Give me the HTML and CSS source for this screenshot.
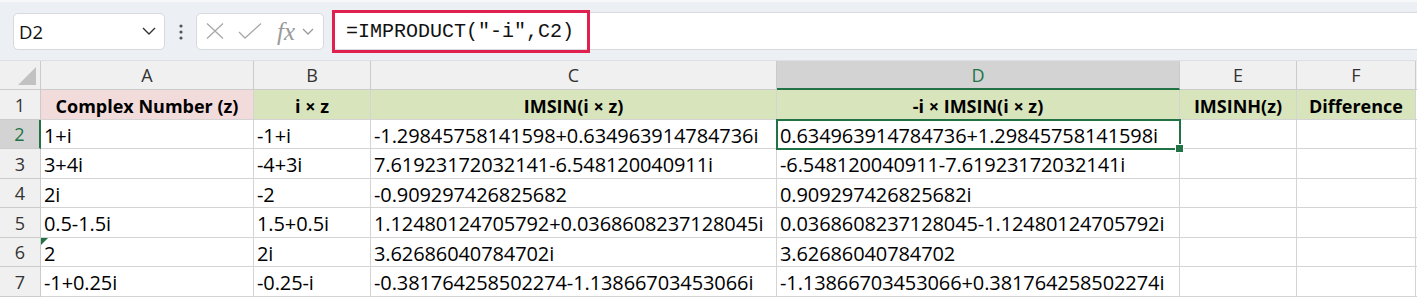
FILE: index.html
```html
<!DOCTYPE html>
<html lang="en">
<head>
    <meta charset="UTF-8">
    <title>IMPRODUCT sheet</title>
    <link rel="stylesheet" href="styles.css">
</head>
<body>
    <!-- Formula bar -->
    <div class="formula-bar">
        <div class="name-box">
            <span>D2</span>
            <svg class="chevron" width="14" height="8" viewBox="0 0 14 8"><path d="M1 1l6 6 6-6" fill="none" stroke="#333" stroke-width="1.4"/></svg>
        </div>
        <div class="dots">
            <svg width="4" height="16" viewBox="0 0 4 16"><circle cx="2" cy="2" r="1.6" fill="#555"/><circle cx="2" cy="8" r="1.6" fill="#555"/><circle cx="2" cy="14" r="1.6" fill="#555"/></svg>
        </div>
        <div class="fx-box">
            <svg width="18" height="16" viewBox="0 0 18 16"><path d="M1 0.5l16 15M17 0.5l-16 15" stroke="#a8a8a8" stroke-width="1.3"/></svg>
            <svg width="24" height="16" viewBox="0 0 24 16"><path d="M1 9l6 6L23 0.5" fill="none" stroke="#a8a8a8" stroke-width="1.3"/></svg>
            <span class="fx">fx</span>
            <svg width="12" height="7" viewBox="0 0 12 7"><path d="M1 1l5 5 5-5" fill="none" stroke="#9a9a9a" stroke-width="1.3"/></svg>
        </div>
        <div class="formula-input">
            <span class="formula-text">=IMPRODUCT("-i",C2)</span>
        </div>
    </div>

    <!-- Grid -->
    <div class="sheet">
        <div class="corner"><span class="corner-tri"></span></div>
        <div class="col-hdr">A</div>
        <div class="col-hdr">B</div>
        <div class="col-hdr">C</div>
        <div class="col-hdr selected">D</div>
        <div class="col-hdr">E</div>
        <div class="col-hdr">F</div>
        <div class="col-hdr"></div>

        <div class="row-hdr">1</div>
        <div class="cell head pink">Complex Number (z)</div>
        <div class="cell head green">i × z</div>
        <div class="cell head green">IMSIN(i × z)</div>
        <div class="cell head green">-i × IMSIN(i × z)</div>
        <div class="cell head green">IMSINH(z)</div>
        <div class="cell head green">Difference</div>
        <div class="cell"></div>

        <div class="row-hdr selected">2</div>
        <div class="cell">1+i</div>
        <div class="cell">-1+i</div>
        <div class="cell">-1.29845758141598+0.634963914784736i</div>
        <div class="cell active">0.634963914784736+1.29845758141598i<span class="handle"></span></div>
        <div class="cell"></div>
        <div class="cell"></div>
        <div class="cell"></div>

        <div class="row-hdr">3</div>
        <div class="cell">3+4i</div>
        <div class="cell">-4+3i</div>
        <div class="cell">7.61923172032141-6.548120040911i</div>
        <div class="cell">-6.548120040911-7.61923172032141i</div>
        <div class="cell"></div>
        <div class="cell"></div>
        <div class="cell"></div>

        <div class="row-hdr">4</div>
        <div class="cell">2i</div>
        <div class="cell">-2</div>
        <div class="cell">-0.909297426825682</div>
        <div class="cell">0.909297426825682i</div>
        <div class="cell"></div>
        <div class="cell"></div>
        <div class="cell"></div>

        <div class="row-hdr">5</div>
        <div class="cell">0.5-1.5i</div>
        <div class="cell">1.5+0.5i</div>
        <div class="cell">1.12480124705792+0.0368608237128045i</div>
        <div class="cell">0.0368608237128045-1.12480124705792i</div>
        <div class="cell"></div>
        <div class="cell"></div>
        <div class="cell"></div>

        <div class="row-hdr">6</div>
        <div class="cell flagged">2</div>
        <div class="cell">2i</div>
        <div class="cell">3.62686040784702i</div>
        <div class="cell">3.62686040784702</div>
        <div class="cell"></div>
        <div class="cell"></div>
        <div class="cell"></div>

        <div class="row-hdr">7</div>
        <div class="cell">-1+0.25i</div>
        <div class="cell">-0.25-i</div>
        <div class="cell">-0.381764258502274-1.13866703453066i</div>
        <div class="cell">-1.13866703453066+0.381764258502274i</div>
        <div class="cell"></div>
        <div class="cell"></div>
        <div class="cell"></div>
    </div>
</body>
</html>
```

FILE: styles.css
```css
body {
    margin: 0;
    padding: 0;
    background: #fff;
    font-family: 'Open Sans', sans-serif;
    color: #000;
    overflow: hidden;
}

/* formula bar */
.formula-bar {
    height: 61px;
    box-sizing: border-box;
    background: #eceff3;
    border-top: 2px solid #f7f8fa;
    border-bottom: 1px solid #dcdfe3;
    display: flex;
    align-items: center;
}

.name-box {
    width: 152px;
    height: 37px;
    box-sizing: border-box;
    margin-left: 13px;
    background: #fff;
    border: 1px solid #d6d9dd;
    border-radius: 5px;
    display: flex;
    align-items: center;
    justify-content: space-between;
    padding: 0 8px 0 5px;
    font-size: 18.5px;
    color: #111;
}

.dots {
    width: 31px;
    display: flex;
    justify-content: center;
    padding-top: 2px;
}

.fx-box {
    width: 128px;
    height: 37px;
    box-sizing: border-box;
    background: #fff;
    border: 1px solid #d6d9dd;
    border-radius: 5px;
    display: flex;
    align-items: center;
    padding: 0 5px 0 9px;
    gap: 14px;
}

.fx-box .fx {
    font-family: 'Liberation Serif', serif;
    font-style: italic;
    font-size: 25px;
    color: #9a9a9a;
    margin-left: 1px;
    margin-right: -7px;
    line-height: 1;
}

.formula-input {
    flex: 1;
    height: 38px;
    box-sizing: border-box;
    margin-left: 8px;
    background: #fff;
    border: 1px solid #d6d9dd;
    border-right: none;
    border-radius: 5px 0 0 5px;
    display: flex;
    align-items: center;
}

.formula-text {
    font-family: 'Liberation Mono', monospace;
    font-size: 20px;
    color: #111;
    margin-left: -1px;
    padding: 7px 13px 7px 11px;
    border: 3px solid #e0204f;
}

/* grid */
.sheet {
    display: grid;
    grid-template-columns: 41px 213px 117px 406px 403px 117px 119px 1fr;
    grid-template-rows: 29px 30px 29px 30px 29px 30px 29px 30px;
}

.corner,
.col-hdr,
.row-hdr {
    background: #f0f0f0;
    border-right: 1px solid #cbcbcb;
    border-bottom: 1px solid #cbcbcb;
    box-sizing: border-box;
    color: #333;
    font-size: 18px;
    display: flex;
    align-items: center;
    justify-content: center;
}

.corner {
    position: relative;
}

.corner-tri {
    position: absolute;
    right: 4px;
    bottom: 4px;
    width: 0;
    height: 0;
    border-left: 18px solid transparent;
    border-bottom: 18px solid #c2c2c2;
}

.col-hdr.selected {
    background: #d3d3d3;
    color: #217346;
    border-bottom: 2px solid #217346;
}

.row-hdr.selected {
    background: #d3d3d3;
    color: #217346;
    border-right: 2px solid #217346;
}

.cell {
    border-right: 1px solid #d4d4d4;
    border-bottom: 1px solid #d4d4d4;
    box-sizing: border-box;
    font-size: 20px;
    letter-spacing: -0.1px;
    white-space: nowrap;
    overflow: visible;
    display: flex;
    align-items: center;
    padding: 2px 3px 0;
    position: relative;
}

.cell.head {
    justify-content: center;
    font-size: 18px;
    letter-spacing: 0;
    font-weight: bold;
}

.cell.pink {
    background: #f2dcdb;
}

.cell.green {
    background: #d8e4bc;
}

.cell.active {
    outline: 2px solid #217346;
    outline-offset: -1px;
    z-index: 2;
}

.handle {
    position: absolute;
    right: -5px;
    bottom: -5px;
    width: 7px;
    height: 7px;
    background: #217346;
    border: 1px solid #fff;
}

.cell.flagged::before {
    content: '';
    position: absolute;
    left: 0;
    top: 0;
    border-top: 7px solid #217346;
    border-right: 7px solid transparent;
}
```
